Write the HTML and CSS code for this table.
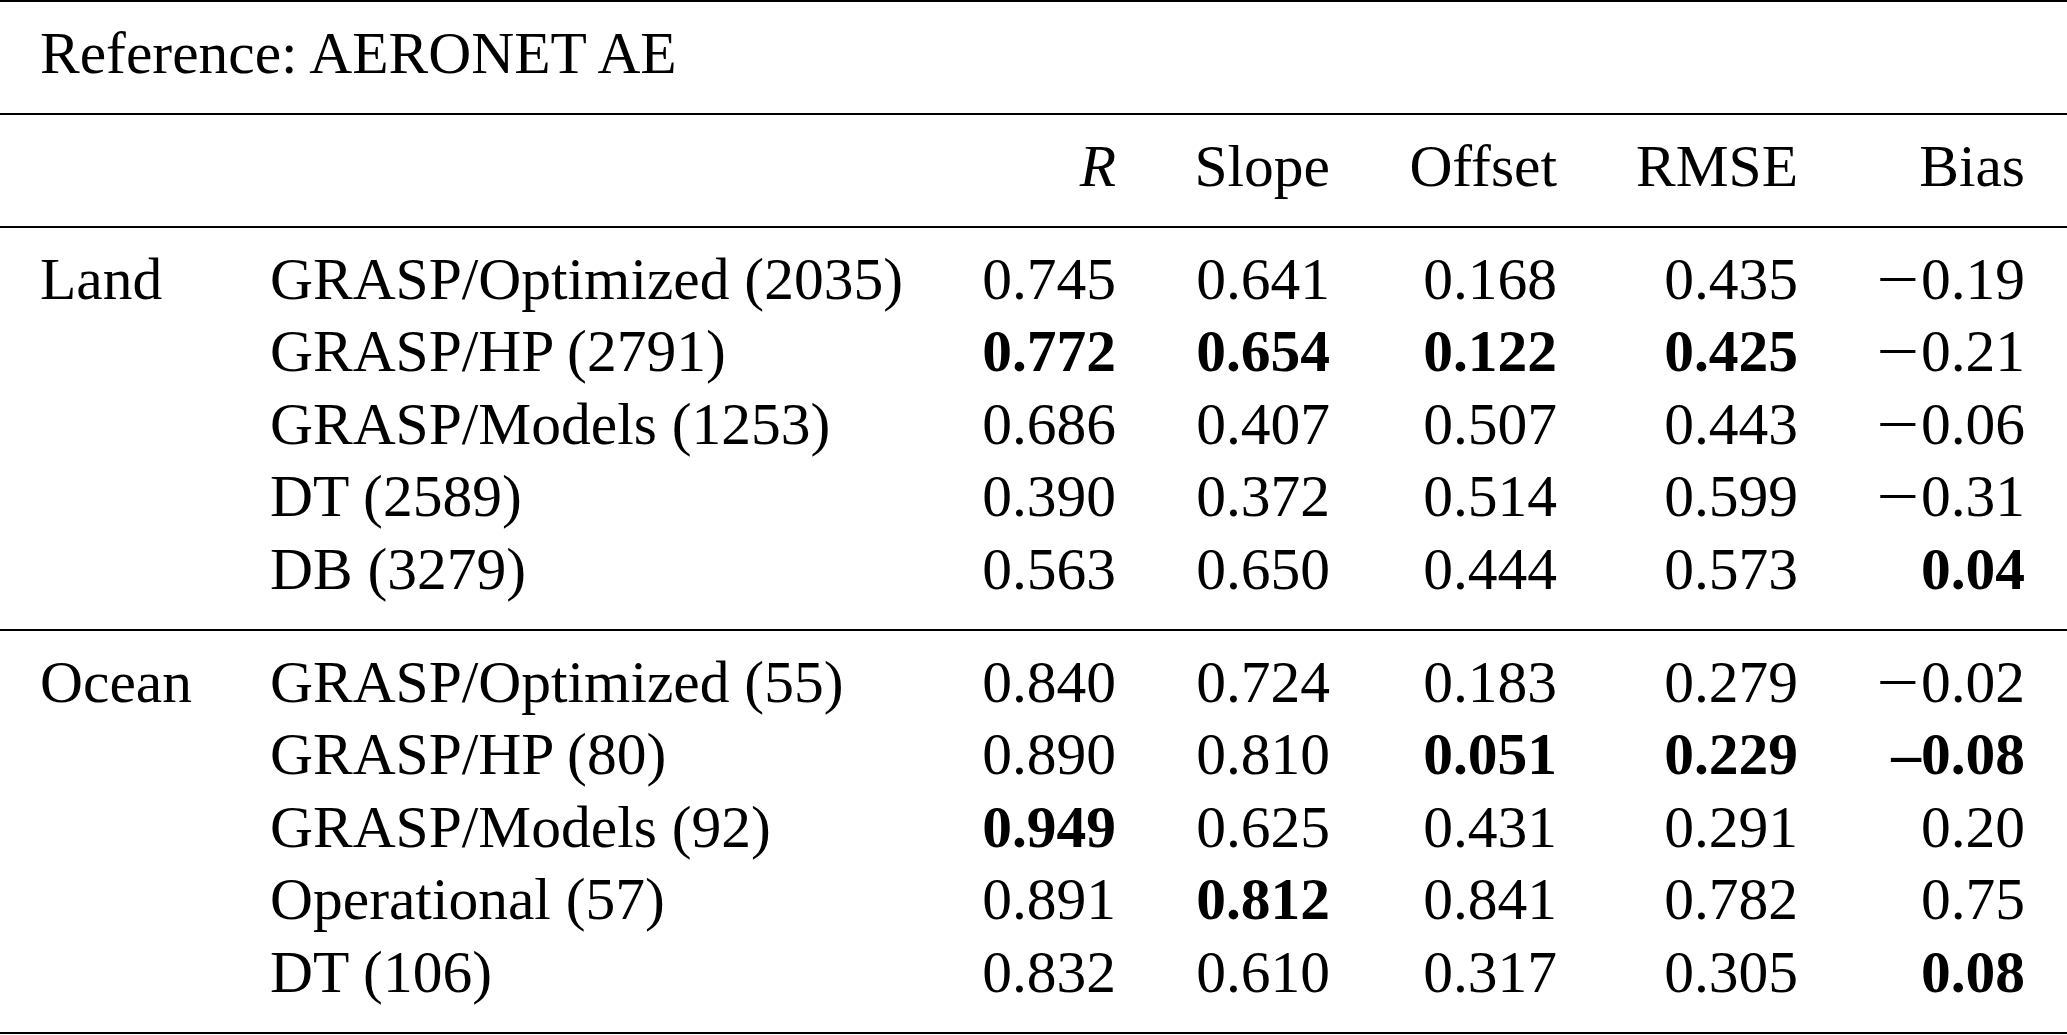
FILE: index.html
```html
<!DOCTYPE html>
<html lang="en">
<head>
<meta charset="utf-8">
<title>Reference: AERONET AE</title>
<link rel="stylesheet" href="styles.css">
</head>
<body>
<div class="table">
  <div class="section">
    <div class="row"><div class="title">Reference: AERONET AE</div></div>
  </div>
  <div class="section">
    <div class="row">
      <div class="group"></div><div class="name"></div>
      <div class="num"><i>R</i></div><div class="num">Slope</div><div class="num">Offset</div><div class="num">RMSE</div><div class="num">Bias</div>
    </div>
  </div>
  <div class="section">
    <div class="row">
      <div class="group">Land</div><div class="name">GRASP/Optimized (2035)</div>
      <div class="num">0.745</div><div class="num">0.641</div><div class="num">0.168</div><div class="num">0.435</div><div class="num"><span class="minus">−</span>0.19</div>
    </div>
    <div class="row">
      <div class="group"></div><div class="name">GRASP/HP (2791)</div>
      <div class="num b">0.772</div><div class="num b">0.654</div><div class="num b">0.122</div><div class="num b">0.425</div><div class="num"><span class="minus">−</span>0.21</div>
    </div>
    <div class="row">
      <div class="group"></div><div class="name">GRASP/Models (1253)</div>
      <div class="num">0.686</div><div class="num">0.407</div><div class="num">0.507</div><div class="num">0.443</div><div class="num"><span class="minus">−</span>0.06</div>
    </div>
    <div class="row">
      <div class="group"></div><div class="name">DT (2589)</div>
      <div class="num">0.390</div><div class="num">0.372</div><div class="num">0.514</div><div class="num">0.599</div><div class="num"><span class="minus">−</span>0.31</div>
    </div>
    <div class="row">
      <div class="group"></div><div class="name">DB (3279)</div>
      <div class="num">0.563</div><div class="num">0.650</div><div class="num">0.444</div><div class="num">0.573</div><div class="num b">0.04</div>
    </div>
  </div>
  <div class="section">
    <div class="row">
      <div class="group">Ocean</div><div class="name">GRASP/Optimized (55)</div>
      <div class="num">0.840</div><div class="num">0.724</div><div class="num">0.183</div><div class="num">0.279</div><div class="num"><span class="minus">−</span>0.02</div>
    </div>
    <div class="row">
      <div class="group"></div><div class="name">GRASP/HP (80)</div>
      <div class="num">0.890</div><div class="num">0.810</div><div class="num b">0.051</div><div class="num b">0.229</div><div class="num b">–0.08</div>
    </div>
    <div class="row">
      <div class="group"></div><div class="name">GRASP/Models (92)</div>
      <div class="num b">0.949</div><div class="num">0.625</div><div class="num">0.431</div><div class="num">0.291</div><div class="num">0.20</div>
    </div>
    <div class="row">
      <div class="group"></div><div class="name">Operational (57)</div>
      <div class="num">0.891</div><div class="num b">0.812</div><div class="num">0.841</div><div class="num">0.782</div><div class="num">0.75</div>
    </div>
    <div class="row">
      <div class="group"></div><div class="name">DT (106)</div>
      <div class="num">0.832</div><div class="num">0.610</div><div class="num">0.317</div><div class="num">0.305</div><div class="num b">0.08</div>
    </div>
  </div>
</div>
</body>
</html>
```
FILE: styles.css
```css
html, body {
  margin: 0;
  padding: 0;
  background: #ffffff;
}

.table {
  width: 2067px;
  font-family: "Liberation Serif", "Times New Roman", serif;
  font-size: 59.5px;
  line-height: 72.5px;
  color: #000000;
  border-top: 2px solid #000000;
}

.section {
  padding: 14.5px 0 24px;
  border-bottom: 2px solid #000000;
}

.row {
  display: grid;
  grid-template-columns: 230px 710px 216px 214px 227px 241px 229px;
  white-space: nowrap;
}

.title {
  grid-column: 1 / -1;
  padding-left: 40px;
}

.group {
  padding-left: 40px;
}

.name {
  padding-left: 40px;
}

.num {
  text-align: right;
  padding-right: 40px;
}

.num:last-child {
  padding-right: 42px;
}

.b {
  font-weight: bold;
}

.minus {
  display: inline-block;
  transform: scaleX(1.27);
  margin: 0 6px 0 6px;
}
```
